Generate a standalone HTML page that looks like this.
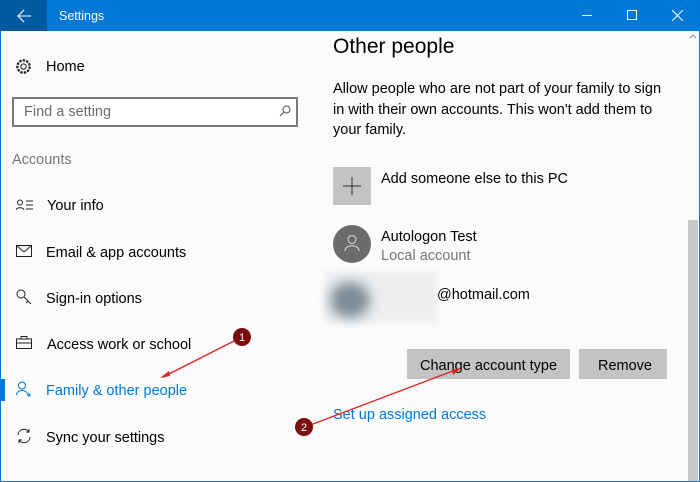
<!DOCTYPE html>
<html><head><meta charset="utf-8"><style>
*{margin:0;padding:0;box-sizing:border-box}
body{width:700px;height:482px;overflow:hidden;background:#0078d7;font-family:"Liberation Sans",sans-serif;position:relative}
.t{position:absolute;white-space:nowrap;margin-top:2px}
#title{position:absolute;left:0;top:0;width:700px;height:31px;background:#0078d7}
#back{position:absolute;left:0;top:0;width:47px;height:31px;background:#005a9e}
#main{position:absolute;left:1px;top:31px;width:698px;height:450px;background:#fbfbfb}
.nav{font-size:14.5px;color:#000}
.ic{position:absolute}
</style></head><body>
<div id="title"></div><div id="back"></div>
<svg class="ic" style="left:16px;top:9px" width="16" height="14"><path d="M15 7H2M8 1L2 7l6 6" stroke="#cfe3f5" stroke-width="1.3" fill="none"/></svg>
<div class="t" style="left:59px;top:7px;color:#fff;font-size:12.5px">Settings</div>
<div style="position:absolute;left:582px;top:15px;width:10px;height:1px;background:#fff"></div>
<div style="position:absolute;left:627px;top:10px;width:10px;height:10px;border:1px solid #fff"></div>
<svg class="ic" style="left:672px;top:10px" width="11" height="11"><path d="M0 0L11 11M11 0L0 11" stroke="#fff" stroke-width="1"/></svg>
<div id="main"></div>
<svg class="ic" style="left:15px;top:58px" width="17" height="17" viewBox="0 0 16 16"><circle cx="8" cy="8" r="2.5" stroke="#222" fill="none"/><circle cx="8" cy="8" r="5.8" stroke="#222" stroke-dasharray="2.2 1.1" stroke-width="2.2" fill="none"/></svg>
<div class="t nav" style="left:46px;top:57px">Home</div>
<div style="position:absolute;left:12px;top:97px;width:286px;height:30px;border:2px solid #7a7a7a;background:#fff"></div>
<div class="t" style="left:24px;top:102px;font-size:14.5px;color:#6d6d6d">Find a setting</div>
<svg class="ic" style="left:279px;top:105px" width="12" height="12"><circle cx="7.5" cy="4.5" r="3.5" stroke="#555" fill="none"/><path d="M5 7L1 11" stroke="#555"/></svg>
<div class="t" style="left:12px;top:150px;font-size:14.5px;color:#767676">Accounts</div>
<svg class="ic" style="left:16px;top:199px" width="18" height="12"><circle cx="4" cy="3.5" r="2.5" stroke="#222" fill="none"/><path d="M0 11c0-3 8-3 8 0M10 2h7M10 6h7M10 10h7" stroke="#222" fill="none"/></svg>
<div class="t nav" style="left:47px;top:196px">Your info</div>
<svg class="ic" style="left:16px;top:245px" width="17" height="12"><rect x=".5" y=".5" width="15" height="11" stroke="#222" fill="none"/><path d="M.5 .5L8 7l7.5-6.5" stroke="#222" fill="none"/></svg>
<div class="t nav" style="left:46px;top:243px">Email &amp; app accounts</div>
<svg class="ic" style="left:16px;top:289px" width="17" height="17"><circle cx="5" cy="5" r="4" stroke="#222" fill="none"/><path d="M8 8l7 7M12 12l-2 2" stroke="#222"/></svg>
<div class="t nav" style="left:46px;top:289px">Sign-in options</div>
<svg class="ic" style="left:16px;top:336px" width="17" height="13"><rect x=".5" y="3" width="15" height="9.5" stroke="#222" fill="none"/><path d="M5 3V.5h6V3M.5 7h15" stroke="#222" fill="none"/></svg>
<div class="t nav" style="left:47px;top:335px">Access work or school</div>
<div style="position:absolute;left:1px;top:379px;width:4px;height:22px;background:#0078d7"></div>
<svg class="ic" style="left:16px;top:381px" width="16" height="17"><circle cx="6" cy="4.5" r="3.5" stroke="#0078d7" fill="none"/><path d="M.5 14c0-6 11-6 11 0M13 12v4M11 14h4" stroke="#0078d7" fill="none"/></svg>
<div class="t nav" style="left:46px;top:381px;color:#0078d7">Family &amp; other people</div>
<svg class="ic" style="left:16px;top:428px" width="16" height="16"><path d="M2 7a6 6 0 0 1 11-3M14 9a6 6 0 0 1-11 3M13 1v3h-3M3 15v-3h3" stroke="#222" fill="none"/></svg>
<div class="t nav" style="left:46px;top:428px">Sync your settings</div>
<div class="t" style="left:333px;top:33px;font-size:21px;color:#000">Other people</div>
<div class="t" style="left:333px;top:77px;font-size:14.5px;line-height:20.5px;color:#000">Allow people who are not part of your family to sign<br>in with their own accounts. This won't add them to<br>your family.</div>
<div style="position:absolute;left:333px;top:167px;width:38px;height:38px;background:#c3c3c3"></div>
<svg class="ic" style="left:343px;top:177px" width="18" height="18"><path d="M9 0v18M0 9h18" stroke="#333" stroke-width="1"/></svg>
<div class="t nav" style="left:381px;top:169px">Add someone else to this PC</div>
<div style="position:absolute;left:333px;top:225px;width:38px;height:38px;border-radius:50%;background:#6b6b6b"></div>
<svg class="ic" style="left:344px;top:234px" width="16" height="18"><circle cx="8" cy="5.5" r="4" stroke="#ddd" fill="none"/><path d="M1 17c0-7 14-7 14 0" stroke="#ddd" fill="none"/></svg>
<div class="t nav" style="left:381px;top:227px">Autologon Test</div>
<div class="t nav" style="left:381px;top:246px;color:#767676">Local account</div>
<div style="position:absolute;left:325px;top:271px;width:112px;height:52px;background:#eceef0;filter:blur(3px)"></div>
<div style="position:absolute;left:330px;top:282px;width:40px;height:36px;border-radius:50%;background:#7f8c97;filter:blur(6px)"></div>
<div class="t nav" style="left:437px;top:285px">@hotmail.com</div>
<div style="position:absolute;left:407px;top:349px;width:163px;height:30px;background:#c3c3c3"></div>
<div class="t nav" style="left:420px;top:356px">Change account type</div>
<div style="position:absolute;left:579px;top:349px;width:88px;height:30px;background:#c3c3c3"></div>
<div class="t nav" style="left:598px;top:356px">Remove</div>
<div class="t nav" style="left:333px;top:405px;color:#0078d7">Set up assigned access</div>
<div style="position:absolute;left:688px;top:220px;width:10px;height:261px;background:#c8c8c8"></div>
<svg class="ic" style="left:689px;top:33px" width="8" height="6"><path d="M1 5l3-3 3 3" stroke="#888" fill="none"/></svg>
<svg style="position:absolute;left:0;top:0" width="700" height="482">
<path d="M240 338L163 377" stroke="#e02020" stroke-width="1.3"/><path d="M160 378l9-7 1 5z" fill="#e02020"/>
<path d="M305 427L458 369" stroke="#e02020" stroke-width="1.3"/><path d="M461 368l-8 7-1-5z" fill="#e02020"/>
<circle cx="242" cy="337" r="9" fill="#7a0d0d"/><text x="242" y="341" fill="#fff" font-size="11" text-anchor="middle" font-family="Liberation Sans">1</text>
<circle cx="304" cy="427" r="9" fill="#7a0d0d"/><text x="304" y="431" fill="#fff" font-size="11" text-anchor="middle" font-family="Liberation Sans">2</text>
</svg>
</body></html>
